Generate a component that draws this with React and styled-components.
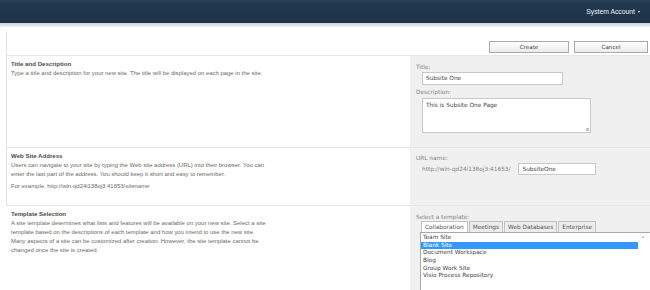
import React from "react";
import styled, { createGlobalStyle } from "styled-components";

const Global = createGlobalStyle`
  html, body {
    margin: 0;
    padding: 0;
    background: #fff;
  }
  body {
    width: 650px;
    height: 290px;
    overflow: hidden;
    font-family: "Liberation Sans", Arial, sans-serif;
  }
`;

const Page = styled.div`
  width: 650px;
  height: 290px;
  overflow: hidden;
  display: flex;
  flex-direction: column;
`;

const TopBar = styled.div`
  height: 23px;
  flex: none;
  display: flex;
  align-items: center;
  justify-content: flex-end;
  padding-right: 10px;
  background: linear-gradient(#2d4359 0px, #22384e 3px, #1f344a 100%);
`;

const Account = styled.div`
  color: #eef1f4;
  font-size: 6.8px;
  display: flex;
  align-items: center;
  gap: 3px;
`;

const Caret = styled.span`
  width: 0;
  height: 0;
  border-left: 1.5px solid transparent;
  border-right: 1.5px solid transparent;
  border-top: 2px solid #e8ecf0;
`;

const Band = styled.div`
  height: 4px;
  flex: none;
  background: linear-gradient(#c9d3dc, #eef1f4);
`;

const Body = styled.div`
  flex: 1;
  padding-left: 6px;
  display: flex;
  flex-direction: column;
`;

const ButtonRow = styled.div`
  height: 24px;
  margin-top: 4px;
  flex: none;
  display: flex;
  justify-content: flex-end;
  align-items: flex-start;
  gap: 5px;
  padding: 10px 2px 0 0;
  box-sizing: border-box;
  border-left: 1px solid #e2e2e2;
`;

const Button = styled.button`
  width: ${(p) => p.$w}px;
  height: 12px;
  padding: 0;
  border: 1px solid #a9a9a9;
  background: linear-gradient(#ffffff, #ebebeb);
  font-family: "DejaVu Sans", Verdana, sans-serif;
  font-size: 5.6px;
  color: #444;
`;

const Section = styled.div`
  display: grid;
  grid-template-columns: 404px 1fr;
  height: ${(p) => (p.$h ? `${p.$h}px` : "auto")};
  flex: ${(p) => (p.$h ? "none" : "1")};
  border-top: 1px solid #e6e6e6;
`;

const Info = styled.div`
  padding: 3px 4px 0 4px;
  border-left: ${(p) => (p.$edge ? "1px solid #e2e2e2" : "1px solid transparent")};
  color: #6a6a6a;
  font-size: 5.95px;
  line-height: 9px;
`;

const Heading = styled.div`
  font-weight: bold;
  color: #4a4a4a;
  font-size: 6.1px;
  line-height: 9px;
  margin-bottom: 1px;
`;

const Para = styled.p`
  margin: 0 0 ${(p) => p.$gap || 0}px 0;
`;

const Panel = styled.div`
  background: #f0f0f0;
  padding: ${(p) => p.$top || 7}px 6px 0 6px;
  font-family: "DejaVu Sans", Verdana, sans-serif;
  font-size: 5.8px;
  color: #858585;
`;

const Label = styled.div`
  line-height: 8px;
  margin-bottom: ${(p) => p.$mb || 0}px;
`;

const Field = styled.div`
  margin-left: 6px;
  width: ${(p) => p.$w}px;
  height: ${(p) => p.$h}px;
  box-sizing: border-box;
  background: #fff;
  border: 1px solid #c8c8c8;
  color: #444;
  padding: ${(p) => (p.$area ? "2px 3px" : "0 3px")};
  line-height: ${(p) => (p.$area ? "8px" : `${p.$h - 2}px`)};
  margin-bottom: ${(p) => p.$mb || 0}px;
  position: relative;
`;

const Grip = styled.span`
  position: absolute;
  right: 1px;
  bottom: 1px;
  width: 3px;
  height: 3px;
  background: radial-gradient(circle, #b8b8b8 0.5px, transparent 0.7px) 0 0 / 1.5px 1.5px;
`;

const UrlRow = styled.div`
  display: flex;
  align-items: center;
  margin-left: 6px;
  gap: 2px;
  margin-top: 1px;
`;

const Tabs = styled.div`
  display: flex;
  margin-left: 5px;
  gap: 1px;
  align-items: flex-end;
`;

const Tab = styled.div`
  height: 11px;
  box-sizing: border-box;
  padding: 0 3px;
  line-height: 10px;
  border: 1px solid #c2c2c2;
  border-bottom: none;
  background: ${(p) => (p.$active ? "#fff" : "#ececec")};
  color: #555;
`;

const ListBox = styled.div`
  margin-left: 4px;
  width: 235px;
  height: 70px;
  box-sizing: border-box;
  background: #fff;
  border: 1px solid #a8a8a8;
  padding-top: 1px;
  position: relative;
`;

const Item = styled.div`
  width: 217px;
  height: 7.7px;
  line-height: 7.7px;
  padding-left: 2px;
  box-sizing: border-box;
  background: ${(p) => (p.$selected ? "#3399ff" : "transparent")};
  color: ${(p) => (p.$selected ? "#fff" : "#444")};
`;

const ScrollArrow = styled.span`
  position: absolute;
  left: 221px;
  top: 3px;
  width: 0;
  height: 0;
  border-left: 1.5px solid transparent;
  border-right: 1.5px solid transparent;
  border-bottom: 2px solid #9a9a9a;
`;

const templates = [
  "Team Site",
  "Blank Site",
  "Document Workspace",
  "Blog",
  "Group Work Site",
  "Visio Process Repository",
];

const tabs = ["Collaboration", "Meetings", "Web Databases", "Enterprise"];

export default function App() {
  return (
    <Page>
      <Global />
      <TopBar>
        <Account>
          System Account <Caret />
        </Account>
      </TopBar>
      <Band />
      <Body>
        <ButtonRow>
          <Button $w={80}>Create</Button>
          <Button $w={74}>Cancel</Button>
        </ButtonRow>

        <Section $h={91}>
          <Info $edge>
            <Heading>Title and Description</Heading>
            <Para>
              Type a title and description for your new site. The title will be displayed on each page in the site.
            </Para>
          </Info>
          <Panel $top={7}>
            <Label $mb={1}>Title:</Label>
            <Field $w={141} $h={13} $mb={3}>
              Subsite One
            </Field>
            <Label $mb={2}>Description:</Label>
            <Field $area $w={169} $h={35}>
              This is Subsite One Page
              <Grip />
            </Field>
          </Panel>
        </Section>

        <Section $h={57}>
          <Info $edge>
            <Heading>Web Site Address</Heading>
            <Para $gap={3}>
              Users can navigate to your site by typing the Web site address (URL) into their browser. You can
              <br />
              enter the last part of the address. You should keep it short and easy to remember.
            </Para>
            <Para>
              For example, http://win-qd24i138oj3:41653/<i>sitename</i>
            </Para>
          </Info>
          <Panel $top={6}>
            <Label>URL name:</Label>
            <UrlRow>
              <span>http://win-qd24i138oj3:41653/</span>
              <Field $w={78} $h={12}>
                SubsiteOne
              </Field>
            </UrlRow>
          </Panel>
        </Section>

        <Section>
          <Info>
            <Heading>Template Selection</Heading>
            <Para>
              A site template determines what lists and features will be available on your new site. Select a site
              <br />
              template based on the descriptions of each template and how you intend to use the new site.
              <br />
              Many aspects of a site can be customized after creation. However, the site template cannot be
              <br />
              changed once the site is created.
            </Para>
          </Info>
          <Panel $top={7}>
            <Label $mb={0}>Select a template:</Label>
            <Tabs>
              {tabs.map((t, i) => (
                <Tab key={t} $active={i === 0}>
                  {t}
                </Tab>
              ))}
            </Tabs>
            <ListBox>
              {templates.map((t, i) => (
                <Item key={t} $selected={i === 1}>
                  {t}
                </Item>
              ))}
              <ScrollArrow />
            </ListBox>
          </Panel>
        </Section>
      </Body>
    </Page>
  );
}
